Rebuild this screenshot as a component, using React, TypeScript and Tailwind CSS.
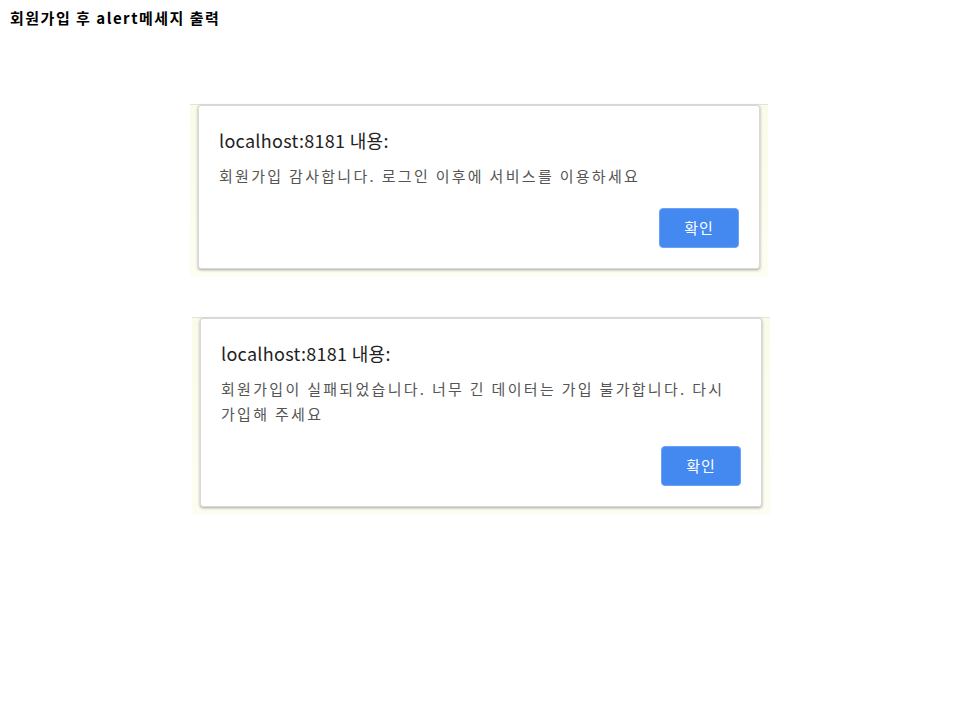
const FONT = { fontFamily: '"Noto Sans CJK KR", "Noto Sans", sans-serif' };

type AlertBoxProps = {
  message: string;
  offset: string;
  marginTop: string;
};

function AlertBox({ message, offset, marginTop }: AlertBoxProps) {
  return (
    <div className={`${offset} ${marginTop} w-[578px] border-t border-[#e2e2e2] bg-gradient-to-b from-[#fbfbe9] to-[#fdfdf2] px-2 pb-2`}>
      <div className="bg-white rounded-[3px] border border-[#d9d9d9] shadow-[0_1px_3px_rgba(0,0,0,0.35)] px-5 pt-[22px] pb-5">
        <h2 className="text-[18px] leading-[24px] tracking-[0.3px] text-[#222]">localhost:8181 내용:</h2>
        <p className="mt-[11px] text-[15px] leading-[25px] tracking-[2.3px] text-[#555] break-keep">{message}</p>
        <div className="mt-[20px] flex justify-end">
          <button className="w-[80px] h-[40px] rounded-[4px] bg-[#4389ef] border border-[#6aa3f5] text-white text-[15px] tracking-[1px]">
            확인
          </button>
        </div>
      </div>
    </div>
  );
}

export default function App() {
  return (
    <div className="min-h-[720px] bg-white" style={FONT}>
      <h1 className="pl-[10px] pt-[8px] text-[15px] leading-[20px] font-bold tracking-[1.5px] text-black">
        회원가입 후 alert메세지 출력
      </h1>
      <AlertBox
        offset="ml-[190px]"
        marginTop="mt-[76px]"
        message="회원가입 감사합니다. 로그인 이후에 서비스를 이용하세요"
      />
      <AlertBox
        offset="ml-[192px]"
        marginTop="mt-[40px]"
        message="회원가입이 실패되었습니다. 너무 긴 데이터는 가입 불가합니다. 다시 가입해 주세요"
      />
    </div>
  );
}
